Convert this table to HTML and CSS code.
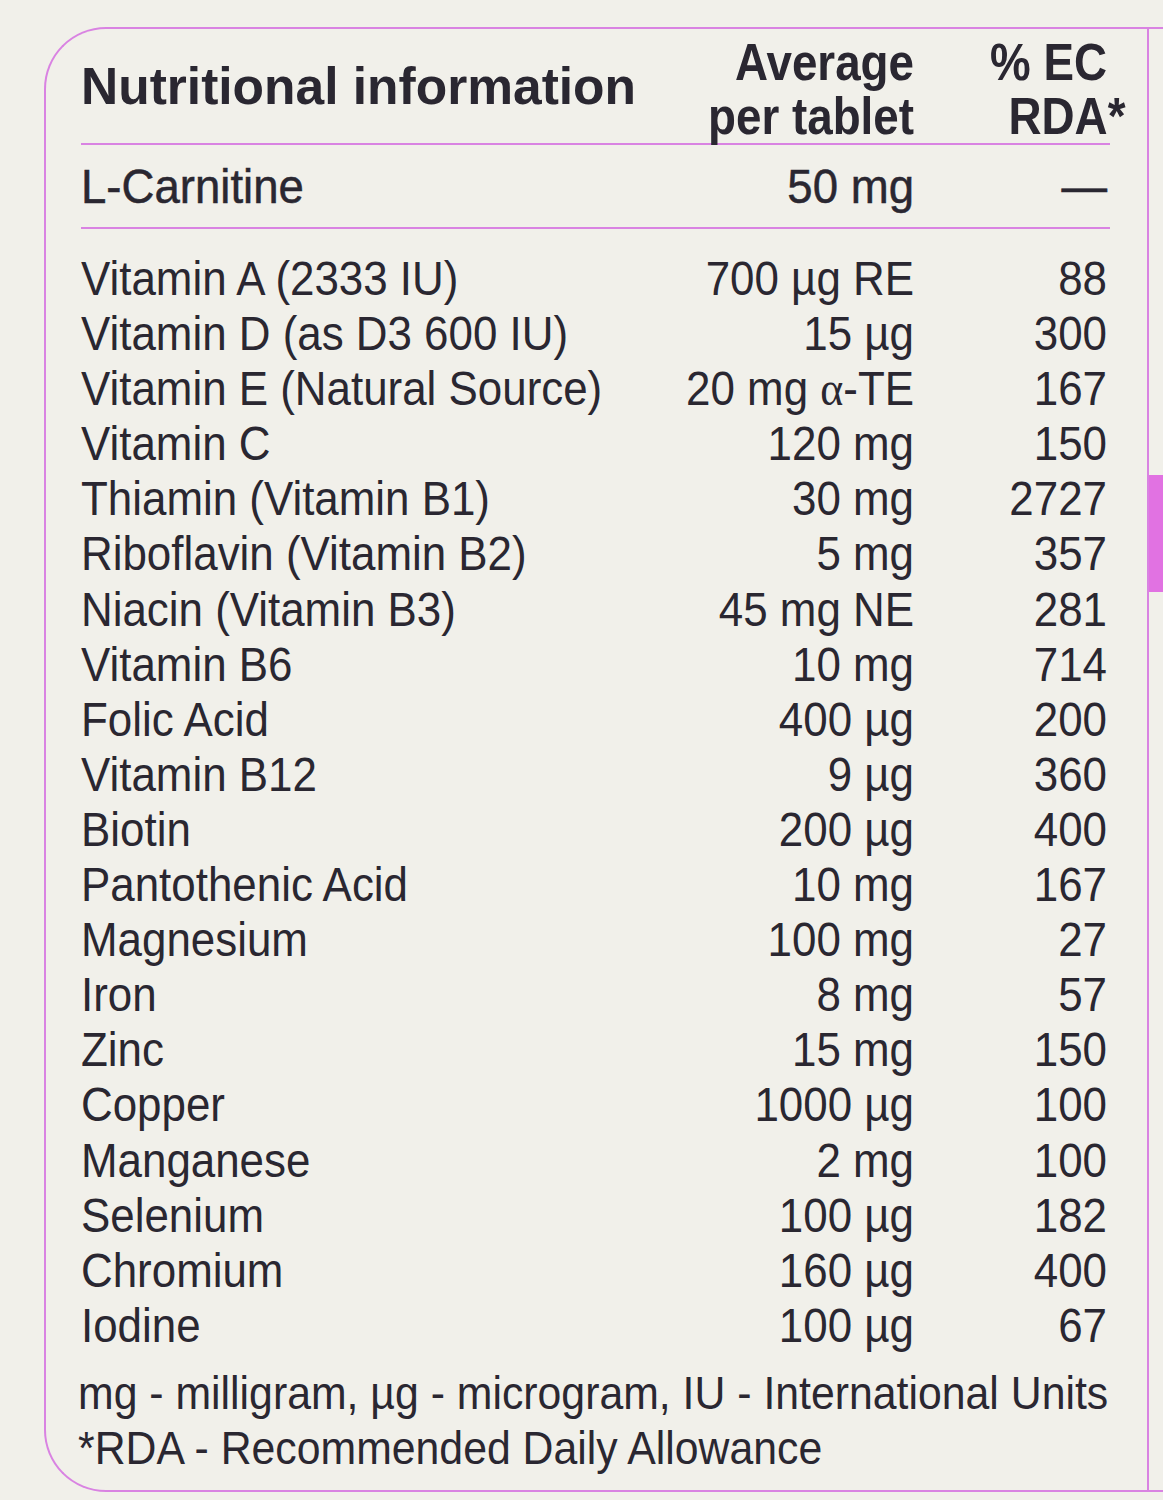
FILE: index.html
```html
<!DOCTYPE html>
<html lang="en">
<head>
<meta charset="utf-8">
<title>Nutritional information</title>
<link rel="stylesheet" href="styles.css">
</head>
<body>
<div class="panel">
  <div class="content">
    <div class="head">
      <div class="title">Nutritional information</div>
      <div class="col-h">Average<br>per tablet</div>
      <div class="col-h">% EC<br><span class="rda">RDA*</span></div>
    </div>
    <div class="rule"></div>
    <div class="lead">
      <div class="name">L-Carnitine</div>
      <div class="num">50 mg</div>
      <div class="num">—</div>
    </div>
    <div class="rule"></div>
    <div class="rows">
      <div class="name">Vitamin A (2333 IU)</div><div class="num">700 µg RE</div><div class="num">88</div>
      <div class="name">Vitamin D (as D3 600 IU)</div><div class="num">15 µg</div><div class="num">300</div>
      <div class="name">Vitamin E (Natural Source)</div><div class="num">20 mg <span class="alpha">α</span>-TE</div><div class="num">167</div>
      <div class="name">Vitamin C</div><div class="num">120 mg</div><div class="num">150</div>
      <div class="name">Thiamin (Vitamin B1)</div><div class="num">30 mg</div><div class="num">2727</div>
      <div class="name">Riboflavin (Vitamin B2)</div><div class="num">5 mg</div><div class="num">357</div>
      <div class="name">Niacin (Vitamin B3)</div><div class="num">45 mg NE</div><div class="num">281</div>
      <div class="name">Vitamin B6</div><div class="num">10 mg</div><div class="num">714</div>
      <div class="name">Folic Acid</div><div class="num">400 µg</div><div class="num">200</div>
      <div class="name">Vitamin B12</div><div class="num">9 µg</div><div class="num">360</div>
      <div class="name">Biotin</div><div class="num">200 µg</div><div class="num">400</div>
      <div class="name">Pantothenic Acid</div><div class="num">10 mg</div><div class="num">167</div>
      <div class="name">Magnesium</div><div class="num">100 mg</div><div class="num">27</div>
      <div class="name">Iron</div><div class="num">8 mg</div><div class="num">57</div>
      <div class="name">Zinc</div><div class="num">15 mg</div><div class="num">150</div>
      <div class="name">Copper</div><div class="num">1000 µg</div><div class="num">100</div>
      <div class="name">Manganese</div><div class="num">2 mg</div><div class="num">100</div>
      <div class="name">Selenium</div><div class="num">100 µg</div><div class="num">182</div>
      <div class="name">Chromium</div><div class="num">160 µg</div><div class="num">400</div>
      <div class="name">Iodine</div><div class="num">100 µg</div><div class="num">67</div>
    </div>
    <div class="foot">
      <div>mg - milligram, µg - microgram, IU - International Units</div>
      <div>*RDA - Recommended Daily Allowance</div>
    </div>
  </div>
  <div class="side">
    <div class="tab"></div>
  </div>
</div>
</body>
</html>
```

FILE: styles.css
```css
html, body {
  margin: 0;
  padding: 0;
}
body {
  background: #f1f0ea;
  color: #2a2731;
  font-family: "Liberation Sans", Arial, sans-serif;
  width: 1163px;
  height: 1500px;
  overflow: hidden;
}
.panel {
  margin: 27px 0 0 44px;
  height: 1465px;
  box-sizing: border-box;
  border-top: 2px solid #d983e2;
  border-bottom: 2px solid #d983e2;
  border-left: 2px solid #d983e2;
  border-radius: 62px 0 0 62px;
  display: flex;
}
.content {
  width: 1103px;
  flex: none;
  box-sizing: border-box;
  border-right: 2px solid #d983e2;
  padding: 6px 40px 0 35px;
}
.side {
  flex: 1;
  padding-top: 446px;
}
.tab {
  height: 117px;
  background: #e172e2;
}
.head, .lead, .rows {
  display: grid;
  grid-template-columns: minmax(0, 1fr) 272px 193px;
  white-space: nowrap;
}
.head {
  font-weight: bold;
  font-size: 52px;
  line-height: 54px;
}
.title {
  font-size: 51.5px;
  align-self: center;
  margin-bottom: 6px;
}
.col-h {
  text-align: right;
  transform: scaleX(0.88);
  transform-origin: right center;
}
.rda {
  margin-right: -21px;
}
.rule {
  height: 2px;
  background: #d983e2;
  margin-right: -3px;
}
.name {
  transform-origin: left center;
}
.num {
  text-align: right;
  transform-origin: right center;
}
.lead {
  font-size: 49px;
  line-height: 82px;
  -webkit-text-stroke: 0.5px #2a2731;
}
.lead > div {
  transform: scaleX(0.93);
}
.rows {
  padding-top: 22px;
  font-size: 48.5px;
  line-height: 55.1px;
}
.rows > div {
  transform: scaleX(0.905);
}
.alpha {
  font-family: "Liberation Serif", serif;
}
.foot {
  margin-top: 13px;
  font-size: 46px;
  line-height: 55px;
  white-space: nowrap;
  transform: scaleX(0.93);
  transform-origin: left center;
  margin-left: -3px;
}
```
